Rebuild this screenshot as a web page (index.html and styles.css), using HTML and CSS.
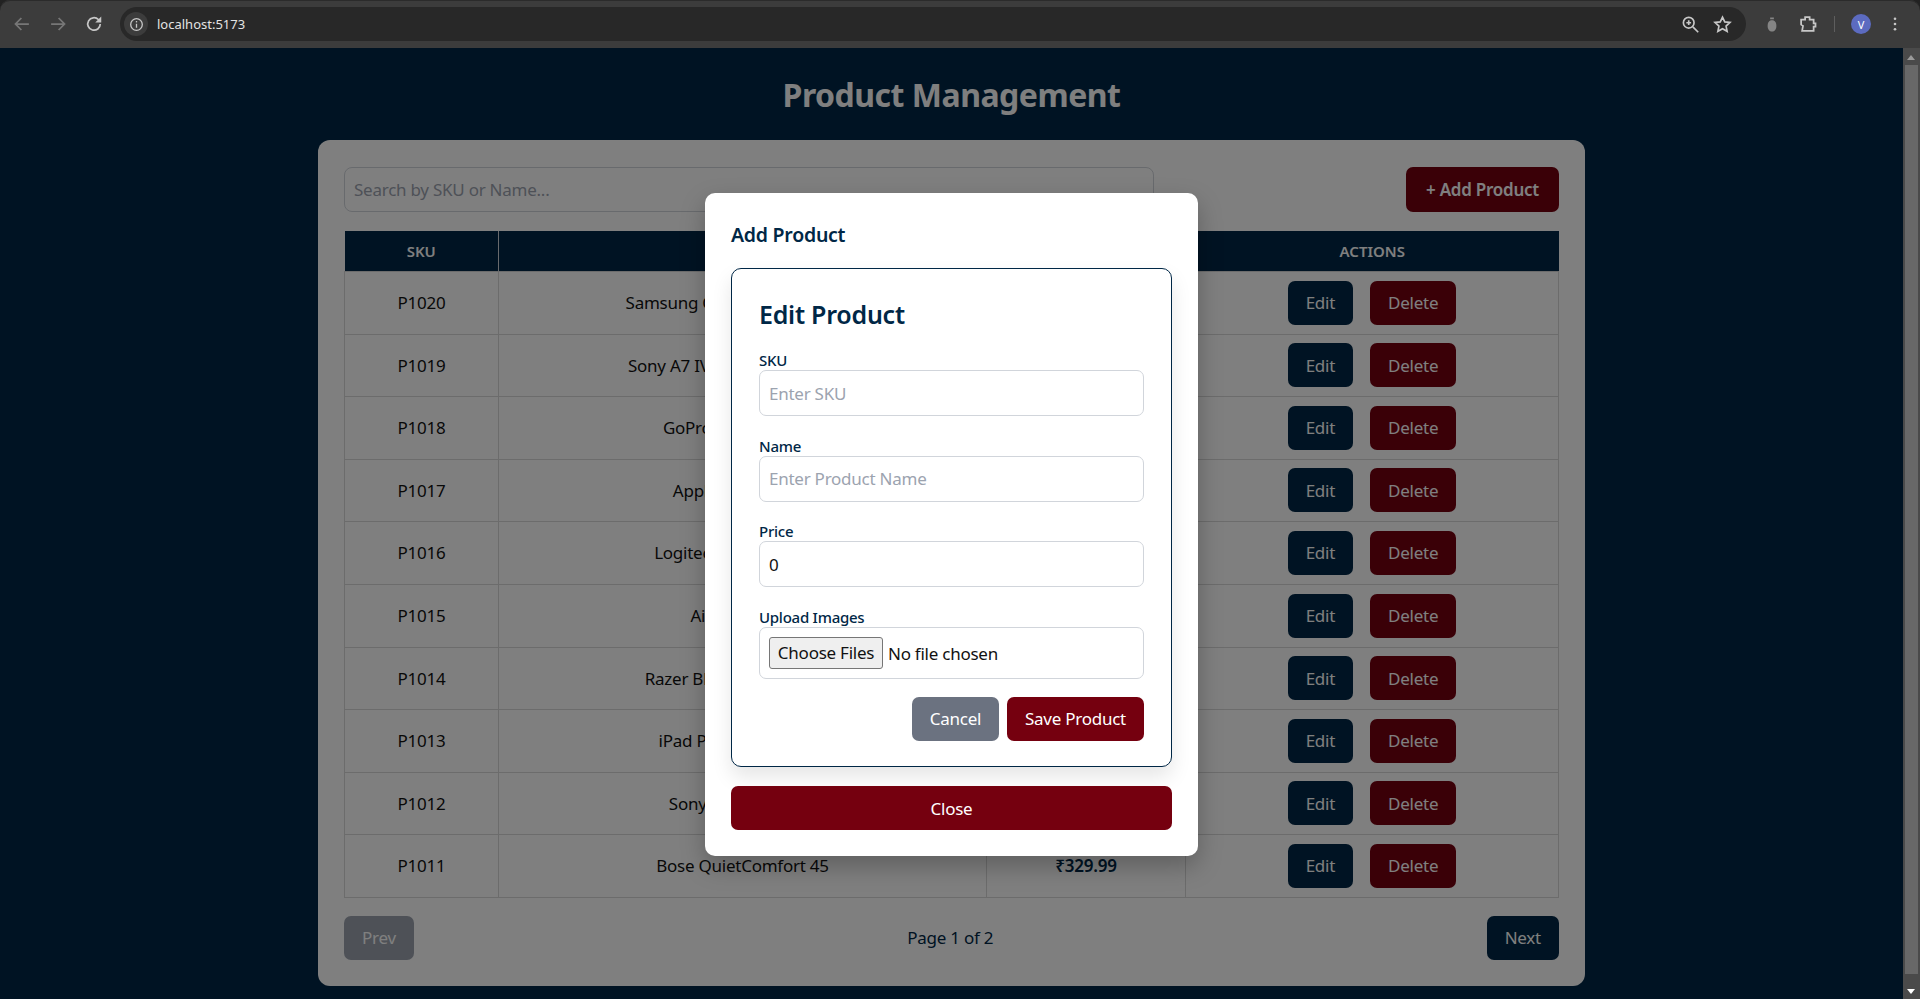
FILE: index.html
```html
<!DOCTYPE html>
<html lang="en">
<head>
    <meta charset="UTF-8">
    <meta name="viewport" content="width=device-width, initial-scale=1.0">
    <title>Product Management</title>
    <link rel="stylesheet" href="styles.css">
</head>
<body>

    <!-- Browser toolbar -->
    <header class="browser-bar">
        <div class="nav-icons">
            <svg class="icon dim" viewBox="0 0 16 16"><path d="M13.5 8H3M7.5 3.2 2.8 8l4.7 4.8"/></svg>
            <svg class="icon dim" viewBox="0 0 16 16"><path d="M2.5 8H13M8.5 3.2 13.2 8l-4.7 4.8"/></svg>
            <svg class="icon" viewBox="0 0 16 16"><path d="M13 8a5 5 0 1 1-1.5-3.6L13 6"/><path class="solid" d="M13.8 2v4.800H9z"/></svg>
        </div>
        <div class="address-bar">
            <span class="info-chip">
                <svg class="icon" viewBox="0 0 16 16"><circle cx="8" cy="8" r="6.200"/><path d="M8 7.200V11.500"/><path d="M8 4.300v1.500"/></svg>
            </span>
            <span class="url">localhost:5173</span>
            <span class="address-actions">
                <svg class="icon" viewBox="0 0 16 16"><circle cx="6.500" cy="6.500" r="4.500"/><path d="M10 10l4.500 4.500M4.500 6.500h4M6.500 4.500v4"/></svg>
                <svg class="icon" viewBox="0 0 16 16"><path d="M8 1.800l1.900 4 4.400.5-3.300 3 .9 4.400L8 11.500l-3.900 2.200.9-4.400-3.300-3 4.400-.5z"/></svg>
            </span>
        </div>
        <div class="browser-actions">
            <svg class="icon bug" viewBox="0 0 16 16"><path class="solid" d="M8 5c2.600 0 3.500 2 3.500 4.500S10 14 8 14s-3.500-2-3.500-4.500S5.400 5 8 5z"/><path d="M6.500 3.500h3"/></svg>
            <svg class="icon" viewBox="0 0 16 16"><path d="M2.500 4.500h3.200V2.500h3.600v2h3.200v3h1.500v2.500h-1.500v3.500H3.300l.7-4-1.500-1z"/></svg>
            <span class="divider"></span>
            <span class="avatar">V</span>
            <svg class="kebab" viewBox="0 0 4 16"><circle cx="2" cy="2" r="1.500"/><circle cx="2" cy="8" r="1.500"/><circle cx="2" cy="14" r="1.500"/></svg>
        </div>
    </header>

    <div class="viewport">
        <main class="page">
            <h1 class="page-title">Product Management</h1>

            <section class="card">
                <div class="toolbar">
                    <input class="search" type="text" placeholder="Search by SKU or Name..." aria-label="Search">
                    <button class="btn btn-red btn-add">+ Add Product</button>
                </div>

                <table class="products">
                    <thead>
                        <tr>
                            <th class="col-sku">SKU</th>
                            <th class="col-name">Name</th>
                            <th class="col-price">Price</th>
                            <th>Actions</th>
                        </tr>
                    </thead>
                    <tbody>
                        <tr><td>P1020</td><td>Samsung Odyssey G9 Monitor</td><td class="price">₹1199.99</td><td><button class="btn btn-navy">Edit</button><button class="btn btn-red">Delete</button></td></tr>
                        <tr><td>P1019</td><td>Sony A7 IV Mirrorless Camera</td><td class="price">₹2499.99</td><td><button class="btn btn-navy">Edit</button><button class="btn btn-red">Delete</button></td></tr>
                        <tr><td>P1018</td><td>GoPro Hero 12 Black</td><td class="price">₹399.99</td><td><button class="btn btn-navy">Edit</button><button class="btn btn-red">Delete</button></td></tr>
                        <tr><td>P1017</td><td>Apple Watch Ultra</td><td class="price">₹799.99</td><td><button class="btn btn-navy">Edit</button><button class="btn btn-red">Delete</button></td></tr>
                        <tr><td>P1016</td><td>Logitech MX Master 3S</td><td class="price">₹99.99</td><td><button class="btn btn-navy">Edit</button><button class="btn btn-red">Delete</button></td></tr>
                        <tr><td>P1015</td><td>AirPods Pro 2</td><td class="price">₹249.99</td><td><button class="btn btn-navy">Edit</button><button class="btn btn-red">Delete</button></td></tr>
                        <tr><td>P1014</td><td>Razer BlackWidow V4 Pro</td><td class="price">₹229.99</td><td><button class="btn btn-navy">Edit</button><button class="btn btn-red">Delete</button></td></tr>
                        <tr><td>P1013</td><td>iPad Pro 12.9-inch M2</td><td class="price">₹1099.99</td><td><button class="btn btn-navy">Edit</button><button class="btn btn-red">Delete</button></td></tr>
                        <tr><td>P1012</td><td>Sony WH-1000XM5</td><td class="price">₹349.99</td><td><button class="btn btn-navy">Edit</button><button class="btn btn-red">Delete</button></td></tr>
                        <tr><td>P1011</td><td>Bose QuietComfort 45</td><td class="price">₹329.99</td><td><button class="btn btn-navy">Edit</button><button class="btn btn-red">Delete</button></td></tr>
                    </tbody>
                </table>

                <div class="pagination">
                    <button class="btn btn-gray">Prev</button>
                    <span class="page-info">Page 1 of 2</span>
                    <button class="btn btn-navy">Next</button>
                </div>
            </section>
        </main>

        <!-- Modal -->
        <div class="overlay">
            <div class="modal">
                <h2 class="modal-title">Add Product</h2>
                <form class="product-form">
                    <h3 class="form-title">Edit Product</h3>
                    <div class="field">
                        <label for="sku">SKU</label>
                        <input id="sku" type="text" placeholder="Enter SKU">
                    </div>
                    <div class="field">
                        <label for="name">Name</label>
                        <input id="name" type="text" placeholder="Enter Product Name">
                    </div>
                    <div class="field">
                        <label for="price">Price</label>
                        <input id="price" type="number" value="0">
                    </div>
                    <div class="field field-file">
                        <label for="images">Upload Images</label>
                        <input id="images" class="file-input" type="file" multiple>
                    </div>
                    <div class="form-actions">
                        <button type="button" class="btn btn-slate">Cancel</button>
                        <button type="button" class="btn btn-red">Save Product</button>
                    </div>
                </form>
                <button class="btn btn-red btn-close">Close</button>
            </div>
        </div>

        <div class="scrollbar">
            <span class="arrow-up"></span>
            <span class="thumb"></span>
            <span class="arrow-down"></span>
        </div>
    </div>

</body>
</html>
```

FILE: styles.css
```css
/* Basic styling for the page */
* {
    box-sizing: border-box;
}
html, body {
    height: 100%;
}
body {
    margin: 0;
    overflow: hidden;
    display: flex;
    flex-direction: column;
    font-family: "Noto Sans", "Liberation Sans", sans-serif;
    font-size: 17px;
    letter-spacing: -0.25px;
    color: #1f2937;
    background-color: #222;
}
button, input {
    font-family: inherit;
    letter-spacing: inherit;
}

/* Browser toolbar */
.browser-bar {
    height: 48px;
    flex: none;
    display: flex;
    align-items: center;
    padding-left: 12px;
    letter-spacing: 0;
    background-color: #3c3c3c;
    box-shadow: inset 0 1px 0 #2b2b2b;
    border-radius: 10px 10px 0 0;
}
.icon {
    width: 20px;
    height: 20px;
    fill: none;
    stroke: #c7c7c7;
    stroke-width: 1.400;
}
.icon .solid {
    fill: #c7c7c7;
    stroke: none;
}
.icon.dim {
    stroke: #777;
}
.icon.bug .solid {
    fill: #858585;
}
.icon.bug {
    stroke: #858585;
}
.nav-icons {
    display: flex;
    gap: 16px;
    width: 108px;
}
.address-bar {
    width: 1626px;
    height: 34px;
    display: flex;
    align-items: center;
    padding: 0 14px 0 4px;
    border-radius: 17px;
    background-color: #282828;
}
.info-chip {
    width: 24px;
    height: 24px;
    display: flex;
    align-items: center;
    justify-content: center;
    border-radius: 50%;
    background-color: #3c3c3c;
}
.info-chip .icon {
    width: 15px;
    height: 15px;
}
.url {
    margin-left: 9px;
    font-size: 13px;
    color: #e3e3e3;
}
.address-actions {
    margin-left: auto;
    display: flex;
    gap: 13px;
}
.address-actions .icon {
    width: 19px;
    height: 19px;
}
.browser-actions {
    flex: 1;
    display: flex;
    align-items: center;
    padding-left: 16px;
    gap: 16px;
}
.divider {
    width: 1px;
    height: 16px;
    background-color: #5e5e5e;
}
.avatar {
    width: 20px;
    height: 20px;
    display: flex;
    align-items: center;
    justify-content: center;
    border-radius: 50%;
    font-size: 11px;
    color: #fff;
    background-color: #5c6bc0;
}
.kebab {
    width: 4px;
    height: 14px;
    margin-left: 6px;
    fill: #c7c7c7;
}

/* Page */
.viewport {
    position: relative;
    flex: 1;
    display: flex;
    min-height: 0;
}
.page {
    flex: 1;
    min-width: 0;
    background-color: #002746;
}
.page-title {
    margin: 0;
    height: 92px;
    padding-top: 25px;
    text-align: center;
    font-size: 32px;
    line-height: 44px;
    font-weight: 700;
    letter-spacing: -0.5px;
    color: #fff;
}
.card {
    width: 1267px;
    height: 846px;
    margin: 0 auto;
    padding: 27px 26px;
    border-radius: 12px;
    background-color: #fff;
}
.toolbar {
    display: flex;
    justify-content: space-between;
    margin-bottom: 19px;
}
.search {
    width: 810px;
    height: 45px;
    padding: 0 9px;
    font-size: 17px;
    border: 1px solid #d1d5db;
    border-radius: 8px;
}
.search::placeholder, .field input::placeholder {
    color: #9ca3af;
}

/* Buttons */
.btn {
    height: 44px;
    padding: 0 18px;
    border: none;
    border-radius: 7px;
    font-size: 17px;
    color: #fff;
    cursor: pointer;
}
.btn-red {
    background-color: #75000f;
}
.btn-navy {
    background-color: #002746;
}
.btn-gray {
    background-color: #9ca3af;
}
.btn-slate {
    background-color: #6b7280;
}
.btn-add {
    width: 153px;
    height: 45px;
    padding: 0;
    font-weight: 600;
}

/* Table */
.products {
    width: 100%;
    table-layout: fixed;
    border-collapse: collapse;
}
.products th {
    height: 40px;
    padding: 0;
    font-size: 15px;
    font-weight: 600;
    letter-spacing: 0;
    text-transform: uppercase;
    color: #fff;
    background-color: #002746;
    border-right: 1px solid #d1d5db;
}
.products th:last-child {
    border-right: none;
}
.col-sku {
    width: 154px;
}
.col-name {
    width: 488px;
}
.col-price {
    width: 199px;
}
.products td {
    height: 63px;
    padding: 0;
    text-align: center;
    color: #111;
    border: 1px solid #d8d8d8;
}
.products tr:nth-child(5n+2) td, .products tr:nth-child(5n+4) td {
    height: 62px;
}
.products td.price {
    font-weight: 600;
    color: #002746;
}
.products td .btn + .btn {
    margin-left: 17px;
}
.pagination {
    display: flex;
    align-items: center;
    justify-content: space-between;
    margin-top: 18px;
}
.page-info {
    color: #002746;
}

/* Modal */
.overlay {
    position: absolute;
    top: 0;
    bottom: 0;
    left: 0;
    right: 17px;
    display: flex;
    align-items: center;
    justify-content: center;
    padding-top: 2px;
    background-color: rgba(0, 0, 0, 0.5);
}
.modal {
    width: 493px;
    height: 663px;
    padding: 26px;
    border-radius: 10px;
    background-color: #fff;
    box-shadow: 0 10px 25px rgba(0, 0, 0, 0.25);
}
.modal-title {
    margin: 0;
    height: 49px;
    padding-top: 1px;
    font-size: 19.500px;
    line-height: 30px;
    font-weight: 600;
    color: #002746;
}
.product-form {
    height: 499px;
    padding: 28px 27px;
    border: 1px solid #002746;
    border-radius: 10px;
    background-color: #fff;
    box-shadow: 0 10px 20px rgba(0, 0, 0, 0.1);
}
.form-title {
    margin: 0 0 19px;
    font-size: 25px;
    line-height: 34px;
    font-weight: 600;
    color: #002746;
}
.field {
    margin-bottom: 19.500px;
}
.field label {
    display: block;
    height: 20px;
    font-size: 15px;
    line-height: 20px;
    font-weight: 500;
    color: #002746;
}
.field input {
    display: block;
    width: 100%;
    height: 46px;
    padding: 0 9px;
    font-size: 17px;
    color: #111;
    border: 1px solid #d1d5db;
    border-radius: 7px;
}
.field-file {
    margin-bottom: 18px;
}
.field .file-input {
    height: 52px;
    padding: 9px;
}
.file-input::file-selector-button {
    width: 114px;
    height: 32px;
    margin-right: 5px;
    font-family: inherit;
    font-size: 17px;
    letter-spacing: inherit;
    color: #111;
    background-color: #efefef;
    border: 1px solid #767676;
    border-radius: 3px;
}
.form-actions {
    display: flex;
    justify-content: flex-end;
    gap: 8px;
}
.form-actions .btn-slate {
    width: 87px;
    padding: 0;
}
.form-actions .btn-red {
    width: 137px;
    padding: 0;
}
.btn-close {
    display: block;
    width: 100%;
    margin-top: 19px;
}

/* Fake scrollbar */
.scrollbar {
    position: relative;
    width: 17px;
    flex: none;
    background-color: #4a4a4a;
}
.thumb {
    position: absolute;
    top: 17px;
    left: 2px;
    right: 2px;
    bottom: 25px;
    background-color: #686868;
}
.arrow-up, .arrow-down {
    position: absolute;
    left: 4px;
    width: 0;
    height: 0;
    border-left: 4.500px solid transparent;
    border-right: 4.500px solid transparent;
}
.arrow-up {
    top: 7px;
    border-bottom: 5px solid #9a9a9a;
}
.arrow-down {
    bottom: 5px;
    border-top: 5px solid #fff;
}
```
